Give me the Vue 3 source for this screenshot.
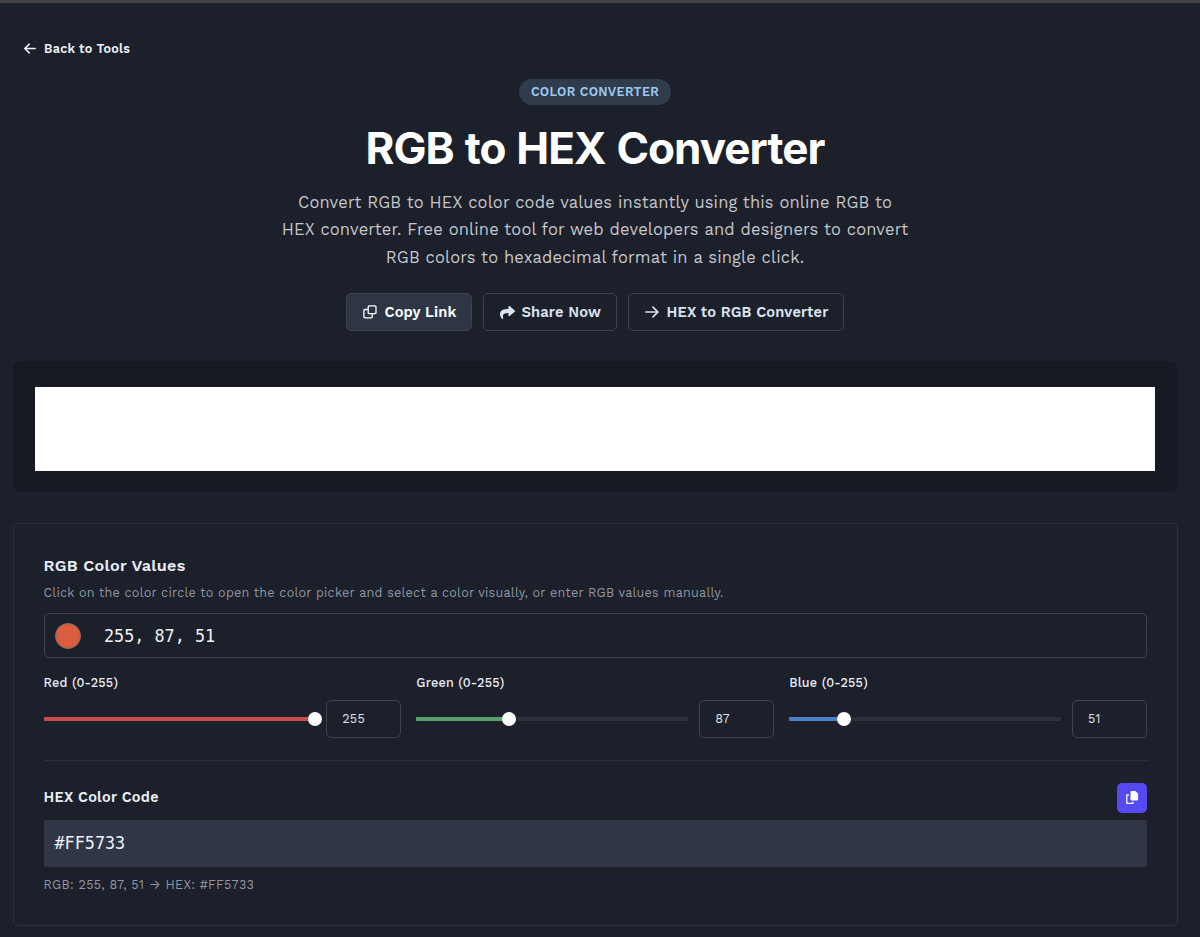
<template>
  <div class="page">
    <a class="back" href="#" @click.prevent>
      <svg class="back-icon" viewBox="0 0 12 12" fill="none" stroke="currentColor" stroke-width="1.5" stroke-linecap="round" stroke-linejoin="round">
        <path d="M11.2 6.5H0.9M5.2 2.1L0.8 6.5l4.4 4.4" />
      </svg>
      <span>Back to Tools</span>
    </a>

    <header class="hero">
      <span class="badge">COLOR CONVERTER</span>
      <h1>RGB to HEX Converter</h1>
      <p class="lead">
        Convert RGB to HEX color code values instantly using this online RGB to<br>
        HEX converter. Free online tool for web developers and designers to convert<br>
        RGB colors to hexadecimal format in a single click.
      </p>
      <div class="actions">
        <button class="btn btn-filled" @click="copy(pageLink)">
          <svg class="icon-copy" viewBox="0 0 14 14" fill="none" stroke="currentColor" stroke-width="1.3" stroke-linejoin="round">
            <rect x="5.2" y="0.9" width="7.8" height="7.8" rx="1" />
            <path d="M5.2 4.5H1.9a1 1 0 0 0-1 1v6.3a1 1 0 0 0 1 1h6.3a1 1 0 0 0 1-1V8.7" />
          </svg>
          <span>Copy Link</span>
        </button>
        <button class="btn btn-share">
          <svg class="icon-share" viewBox="0 0 512 512" fill="currentColor">
            <path d="M503.7 189.8L327.7 37.9C312.3 24.5 288 35.3 288 56v80.1C127.4 137.9 0 170.1 0 322.3c0 61.4 39.6 122.3 83.3 154.1 13.7 9.9 33.1-2.5 28.1-18.6C66.1 312.8 132.9 274.3 288 272.1V360c0 20.7 24.3 31.5 39.7 18.2l176-152c11.1-9.6 11.1-26.8 0-36.4z" />
          </svg>
          <span>Share Now</span>
        </button>
        <button class="btn btn-swap">
          <svg class="icon-arrow" viewBox="0 0 14 14" fill="none" stroke="currentColor" stroke-width="1.7" stroke-linecap="round" stroke-linejoin="round">
            <path d="M1 7h12M8 2.2L12.9 7 8 11.8" />
          </svg>
          <span>HEX to RGB Converter</span>
        </button>
      </div>
    </header>

    <div class="banner"><div class="banner-slot"></div></div>

    <main class="card">
      <h2>RGB Color Values</h2>
      <p class="hint">Click on the color circle to open the color picker and select a color visually, or enter RGB values manually.</p>

      <div class="rgb-field">
        <span class="swatch"></span>
        <span class="mono">{{ rgb }}</span>
      </div>

      <div class="channels">
        <div v-for="c in channels" :key="c.name" class="channel">
          <span class="channel-label">{{ c.label }} (0-255)</span>
          <div class="channel-row">
            <div class="track">
              <div class="fill" :class="c.name" :style="{ width: percent(c.value) }"><i class="thumb"></i></div>
            </div>
            <input v-model.number="c.value" class="number" type="text" inputmode="numeric">
          </div>
        </div>
      </div>

      <div class="hex-head">
        <h3>HEX Color Code</h3>
        <button class="copy-hex" aria-label="Copy" @click="copy(hex)">
          <svg viewBox="0 0 14 15">
            <path d="M4 4.9H1.8v8.4h6.1v-1.6" fill="none" stroke="#fff" stroke-width="1.3" stroke-linejoin="round" />
            <path d="M6.6 1h3.6l2.9 2.4v6a1.1 1.1 0 0 1-1.1 1.1H6.6a1.1 1.1 0 0 1-1.1-1.1V2.1A1.1 1.1 0 0 1 6.6 1z" fill="#fff" />
          </svg>
        </button>
      </div>
      <div class="hex-field mono">{{ hex }}</div>
      <p class="summary">RGB: {{ rgb }} <span class="to">→</span> HEX: {{ hex }}</p>
    </main>
  </div>
</template>

<script setup>
import { computed, reactive } from 'vue'

const pageLink = '/rgb-to-hex'

const channels = reactive([
  { name: 'red', label: 'Red', value: 255 },
  { name: 'green', label: 'Green', value: 87 },
  { name: 'blue', label: 'Blue', value: 51 }
])

const clamp = (v) => Math.min(255, Math.max(0, Number(v) || 0))
const percent = (v) => `${(clamp(v) / 255) * 100}%`

const rgb = computed(() => channels.map((c) => clamp(c.value)).join(', '))
const hex = computed(() => '#' + channels.map((c) => clamp(c.value).toString(16).padStart(2, '0')).join('').toUpperCase())

function copy(text) {
  navigator.clipboard?.writeText(text)
}
</script>

<style>
body {
  margin: 0;
  background: #1c202a;
}
</style>

<style scoped>
* {
  box-sizing: border-box;
}

h1,
h2,
h3,
p {
  margin: 0;
}

.page {
  height: 937px;
  overflow: hidden;
  padding: 37px 22.5px 0 12.5px;
  border-top: 3px solid #414045;
  background: #1c202a;
  color: #e8ecf4;
  font-family: "Work Sans", Inter, sans-serif;
}

.back {
  display: flex;
  align-items: center;
  gap: 8px;
  height: 16px;
  margin-left: 11.5px;
  color: #edf0f6;
  font-size: 12.5px;
  font-weight: 600;
  letter-spacing: 0.3px;
  text-decoration: none;
}

.back-icon {
  width: 12px;
  height: 12px;
}

.hero {
  display: flex;
  flex-direction: column;
  align-items: center;
  padding-top: 23px;
}

.badge {
  width: 152px;
  height: 26px;
  border-radius: 13px;
  background: #303b4c;
  color: #9dc9ee;
  font-size: 12.6px;
  font-weight: 650;
  line-height: 26px;
  text-align: center;
  letter-spacing: 0.3px;
  white-space: nowrap;
}

h1 {
  margin-top: 16px;
  color: #fff;
  font-family: Inter, sans-serif;
  font-size: 44px;
  font-weight: 650;
  line-height: 54px;
  letter-spacing: -0.95px;
  word-spacing: 1.4px;
  white-space: nowrap;
}

.lead {
  margin-top: 14px;
  color: #c4c6ca;
  font-size: 16.5px;
  line-height: 27.3px;
  letter-spacing: 0.15px;
  text-align: center;
  white-space: nowrap;
}

.actions {
  display: flex;
  gap: 11px;
  margin-top: 22px;
}

.btn {
  display: flex;
  align-items: center;
  height: 38px;
  padding: 1px 0 0 15.5px;
  border: 1px solid #3d424e;
  border-radius: 5px;
  background: transparent;
  color: #dbe3f0;
  font-family: inherit;
  font-size: 14.7px;
  font-weight: 600;
  letter-spacing: 0.13px;
  white-space: nowrap;
}

.btn-filled {
  width: 126px;
  background: #2e3646;
  color: #fff;
}

.btn-share {
  width: 134px;
}

.btn-swap {
  width: 216px;
}

.icon-copy,
.icon-arrow {
  width: 14px;
  height: 14px;
  margin-right: 8px;
}

.icon-share {
  width: 15px;
  height: 15px;
  margin-right: 7px;
}

.banner {
  height: 131px;
  margin-top: 30px;
  padding: 26px 22.5px 21px;
  border-radius: 8px;
  background: #171a22;
}

.banner-slot {
  height: 84px;
  background: #fff;
}

.card {
  height: 403px;
  margin-top: 31px;
  padding: 32px 29.5px 0 30px;
  border: 1px solid #2b303a;
  border-radius: 5px;
}

h2 {
  height: 20px;
  font-size: 16.2px;
  font-weight: 600;
  line-height: 20px;
  letter-spacing: 0.3px;
}

.hint {
  height: 18px;
  margin-top: 8px;
  color: #8f95a3;
  font-size: 12.6px;
  line-height: 18px;
  letter-spacing: 0.23px;
  white-space: nowrap;
}

.rgb-field {
  display: flex;
  align-items: center;
  gap: 23px;
  height: 45px;
  margin-top: 11.5px;
  padding-left: 10.5px;
  border: 1px solid #3d424e;
  border-radius: 5px;
}

.swatch {
  width: 26px;
  height: 26px;
  border: 1px solid #8e6b65;
  border-radius: 50%;
  background: #db5d41;
}

.mono {
  color: #eef1f7;
  font-family: "DejaVu Sans Mono", monospace;
  font-size: 16.8px;
  white-space: pre;
}

.channels {
  display: grid;
  grid-template-columns: repeat(3, 1fr);
  gap: 15px;
  height: 102.5px;
  border-bottom: 1px solid #292e38;
}

.channel-label {
  display: block;
  margin-top: 16.5px;
  font-size: 12.6px;
  font-weight: 500;
  line-height: 16px;
  letter-spacing: 0.22px;
}

.channel-row {
  display: flex;
  align-items: center;
  gap: 11px;
  margin-top: 9px;
}

.track {
  flex: 1;
  height: 4px;
  border-radius: 1px;
  background: #2d303c;
}

.fill {
  display: flex;
  align-items: center;
  justify-content: flex-end;
  height: 4px;
  border-radius: 1px;
}

.fill.red {
  background: #c94d4d;
}

.fill.green {
  background: #5a9e6b;
}

.fill.blue {
  background: #4c7fc4;
}

.thumb {
  flex: none;
  width: 14px;
  height: 14px;
  margin-right: -7px;
  border-radius: 50%;
  background: #fff;
}

.number {
  width: 75px;
  height: 38px;
  padding: 0 15px 1px;
  border: 1px solid #3d424e;
  border-radius: 5px;
  outline: none;
  background: transparent;
  color: #dce0e8;
  font-family: inherit;
  font-size: 12.6px;
  letter-spacing: 0.2px;
}

.hex-head {
  display: flex;
  align-items: center;
  justify-content: space-between;
  height: 30px;
  margin-top: 22px;
}

h3 {
  font-size: 14.5px;
  font-weight: 600;
  letter-spacing: 0.25px;
}

.copy-hex {
  display: flex;
  align-items: center;
  justify-content: center;
  width: 30px;
  height: 30px;
  padding: 0;
  border: 0;
  border-radius: 5px;
  background: #5549f1;
}

.copy-hex svg {
  width: 14px;
  height: 15px;
}

.hex-field {
  height: 47px;
  margin-top: 7.5px;
  padding-left: 11px;
  border-radius: 2px;
  background: #303645;
  line-height: 46px;
}

.summary {
  margin-top: 9px;
  color: #8f95a3;
  font-size: 12.6px;
  line-height: 18px;
  letter-spacing: 0.27px;
}

.to {
  font-family: Inter, sans-serif;
}
</style>
